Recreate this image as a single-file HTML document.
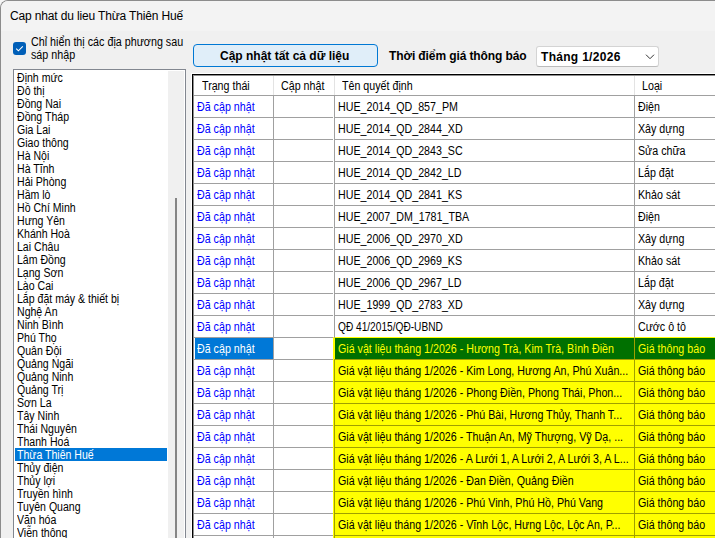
<!DOCTYPE html>
<html><head><meta charset="utf-8">
<style>
*{margin:0;padding:0;box-sizing:border-box}
html,body{width:715px;height:538px;overflow:hidden;background:#f0f0f0}
body{position:relative;font-family:"Liberation Sans",sans-serif;color:#000}
.a{position:absolute;white-space:nowrap}
.r{position:absolute}
.li{position:absolute;left:3px;font-size:12px;line-height:13px;white-space:nowrap;letter-spacing:0px;transform:scaleX(0.88);transform-origin:0 0}
.g{position:absolute;font-size:12px;line-height:13px;white-space:nowrap;letter-spacing:0px;transform:scaleX(0.89);transform-origin:0 0}
</style></head><body>
<div class="r" style="left:0;top:0;width:10px;height:10px;background:#f5f5f5"></div>
<div class="r" style="left:0;top:0;width:760px;height:600px;border-left:1px solid #8c8c8c;border-top:1px solid #8c8c8c;border-top-left-radius:8px;background:#f0f0f0;overflow:hidden"><div class="r" style="left:0;top:0;width:760px;height:30px;background:#f3f3f3"></div></div>
<div class="a" style="left:10px;top:9px;font-size:12px;line-height:14px;letter-spacing:-0.15px">Cap nhat du lieu Thừa Thiên Huế</div>
<div class="r" style="left:13px;top:42px;width:13px;height:13px;background:#005fb8;border-radius:3px"><svg width="13" height="13" viewBox="0 0 13 13" style="position:absolute;left:0;top:0"><path d="M3.2 6.6 L5.4 8.8 L9.8 4.3" fill="none" stroke="#fff" stroke-width="1.1"/></svg></div>
<div class="a" style="left:31px;top:36px;font-size:12px;line-height:12.5px;letter-spacing:0px;transform:scaleX(0.895);transform-origin:0 0">Chỉ hiển thị các địa phương sau<br>sáp nhập</div>
<div class="r" style="left:13px;top:69px;width:173px;height:480px;border:1px solid #828790;background:#fff;overflow:hidden"><div class="r" style="left:154px;top:1px;width:16px;height:480px;background:#f0f0f0"></div><div class="r" style="left:161px;top:128px;width:2px;height:400px;background:#858585"></div><div class="r" style="left:1px;top:378px;width:152px;height:13px;background:#0078d7"></div></div>
<div class="r" style="left:14px;top:71px;width:154px;height:467px;overflow:hidden">
<div class="li" style="top:1px;color:#000">Định mức</div>
<div class="li" style="top:14px;color:#000">Đô thị</div>
<div class="li" style="top:27px;color:#000">Đồng Nai</div>
<div class="li" style="top:40px;color:#000">Đồng Tháp</div>
<div class="li" style="top:53px;color:#000">Gia Lai</div>
<div class="li" style="top:66px;color:#000">Giao thông</div>
<div class="li" style="top:79px;color:#000">Hà Nội</div>
<div class="li" style="top:92px;color:#000">Hà Tĩnh</div>
<div class="li" style="top:105px;color:#000">Hải Phòng</div>
<div class="li" style="top:118px;color:#000">Hầm lò</div>
<div class="li" style="top:131px;color:#000">Hồ Chí Minh</div>
<div class="li" style="top:144px;color:#000">Hưng Yên</div>
<div class="li" style="top:157px;color:#000">Khánh Hoà</div>
<div class="li" style="top:170px;color:#000">Lai Châu</div>
<div class="li" style="top:183px;color:#000">Lâm Đồng</div>
<div class="li" style="top:196px;color:#000">Lạng Sơn</div>
<div class="li" style="top:209px;color:#000">Lào Cai</div>
<div class="li" style="top:222px;color:#000">Lắp đặt máy &amp; thiết bị</div>
<div class="li" style="top:235px;color:#000">Nghệ An</div>
<div class="li" style="top:248px;color:#000">Ninh Bình</div>
<div class="li" style="top:261px;color:#000">Phú Thọ</div>
<div class="li" style="top:274px;color:#000">Quân Đội</div>
<div class="li" style="top:287px;color:#000">Quảng Ngãi</div>
<div class="li" style="top:300px;color:#000">Quảng Ninh</div>
<div class="li" style="top:313px;color:#000">Quảng Trị</div>
<div class="li" style="top:326px;color:#000">Sơn La</div>
<div class="li" style="top:339px;color:#000">Tây Ninh</div>
<div class="li" style="top:352px;color:#000">Thái Nguyên</div>
<div class="li" style="top:365px;color:#000">Thanh Hoá</div>
<div class="li" style="top:378px;color:#fff">Thừa Thiên Huế</div>
<div class="li" style="top:391px;color:#000">Thủy điện</div>
<div class="li" style="top:404px;color:#000">Thủy lợi</div>
<div class="li" style="top:417px;color:#000">Truyền hình</div>
<div class="li" style="top:430px;color:#000">Tuyên Quang</div>
<div class="li" style="top:443px;color:#000">Văn hóa</div>
<div class="li" style="top:456px;color:#000">Viễn thông</div>
</div>
<div class="r" style="left:193px;top:44px;width:185px;height:23px;border:1px solid #0078d4;border-radius:4px;background:#e0eef9"></div>
<div class="a" style="left:220px;top:49px;font-size:12px;line-height:14px;font-weight:bold;letter-spacing:0px">Cập nhật tất cả dữ liệu</div>
<div class="a" style="left:389px;top:49px;font-size:12px;line-height:14px;font-weight:bold;letter-spacing:-0.1px">Thời điểm giá thông báo</div>
<div class="r" style="left:536px;top:46px;width:123px;height:21px;border:1px solid #d4d4d4;border-bottom-color:#bcbcbc;border-radius:3px;background:#fff"></div>
<div class="a" style="left:541px;top:50px;font-size:12px;line-height:14px;font-weight:bold;letter-spacing:0.3px">Tháng 1/2026</div>
<svg class="r" style="left:645px;top:53px" width="11" height="7" viewBox="0 0 11 7"><path d="M1 1.7 L5 5.7 L9 1.7" fill="none" stroke="#333" stroke-width="1"/></svg>
<div class="r" style="left:191px;top:73px;width:540px;height:480px;background:#fff;overflow:hidden">
<div class="r" style="left:3px;top:3px;width:540px;height:19px;background:#fff"></div>
<div class="r" style="left:3px;top:22px;width:540px;height:1px;background:#a0a0a0"></div>
<div class="r" style="left:82px;top:3px;width:1px;height:19px;background:#e3e3e3"></div>
<div class="r" style="left:143px;top:3px;width:1px;height:19px;background:#e3e3e3"></div>
<div class="r" style="left:443px;top:3px;width:1px;height:19px;background:#e3e3e3"></div>
<div class="g" style="left:11px;top:7px">Trạng thái</div>
<div class="g" style="left:90px;top:7px">Cập nhật</div>
<div class="g" style="left:151px;top:7px">Tên quyết định</div>
<div class="g" style="left:451px;top:7px">Loại</div>
<div class="r" style="left:142px;top:264px;width:500px;height:23px;background:#ff0"></div>
<div class="r" style="left:144px;top:265px;width:500px;height:21px;background:#007000"></div>
<div class="r" style="left:4px;top:265px;width:78px;height:21px;background:#0078d7"></div>
<div class="r" style="left:142px;top:286px;width:500px;height:23px;background:#ff0"></div>
<div class="r" style="left:142px;top:308px;width:500px;height:23px;background:#ff0"></div>
<div class="r" style="left:142px;top:330px;width:500px;height:23px;background:#ff0"></div>
<div class="r" style="left:142px;top:352px;width:500px;height:23px;background:#ff0"></div>
<div class="r" style="left:142px;top:374px;width:500px;height:23px;background:#ff0"></div>
<div class="r" style="left:142px;top:396px;width:500px;height:23px;background:#ff0"></div>
<div class="r" style="left:142px;top:418px;width:500px;height:23px;background:#ff0"></div>
<div class="r" style="left:142px;top:440px;width:500px;height:23px;background:#ff0"></div>
<div class="r" style="left:142px;top:462px;width:500px;height:23px;background:#ff0"></div>
<div class="r" style="left:3px;top:44px;width:139px;height:1px;background:#a0a0a0"></div>
<div class="r" style="left:143px;top:44px;width:500px;height:1px;background:#a0a0a0"></div>
<div class="r" style="left:3px;top:66px;width:139px;height:1px;background:#a0a0a0"></div>
<div class="r" style="left:143px;top:66px;width:500px;height:1px;background:#a0a0a0"></div>
<div class="r" style="left:3px;top:88px;width:139px;height:1px;background:#a0a0a0"></div>
<div class="r" style="left:143px;top:88px;width:500px;height:1px;background:#a0a0a0"></div>
<div class="r" style="left:3px;top:110px;width:139px;height:1px;background:#a0a0a0"></div>
<div class="r" style="left:143px;top:110px;width:500px;height:1px;background:#a0a0a0"></div>
<div class="r" style="left:3px;top:132px;width:139px;height:1px;background:#a0a0a0"></div>
<div class="r" style="left:143px;top:132px;width:500px;height:1px;background:#a0a0a0"></div>
<div class="r" style="left:3px;top:154px;width:139px;height:1px;background:#a0a0a0"></div>
<div class="r" style="left:143px;top:154px;width:500px;height:1px;background:#a0a0a0"></div>
<div class="r" style="left:3px;top:176px;width:139px;height:1px;background:#a0a0a0"></div>
<div class="r" style="left:143px;top:176px;width:500px;height:1px;background:#a0a0a0"></div>
<div class="r" style="left:3px;top:198px;width:139px;height:1px;background:#a0a0a0"></div>
<div class="r" style="left:143px;top:198px;width:500px;height:1px;background:#a0a0a0"></div>
<div class="r" style="left:3px;top:220px;width:139px;height:1px;background:#a0a0a0"></div>
<div class="r" style="left:143px;top:220px;width:500px;height:1px;background:#a0a0a0"></div>
<div class="r" style="left:3px;top:242px;width:139px;height:1px;background:#a0a0a0"></div>
<div class="r" style="left:143px;top:242px;width:500px;height:1px;background:#a0a0a0"></div>
<div class="r" style="left:3px;top:264px;width:139px;height:1px;background:#a0a0a0"></div>
<div class="r" style="left:142px;top:264px;width:500px;height:1px;background:#ff0"></div>
<div class="r" style="left:3px;top:286px;width:139px;height:1px;background:#a0a0a0"></div>
<div class="r" style="left:143px;top:286px;width:500px;height:1px;background:#a0a000"></div>
<div class="r" style="left:3px;top:308px;width:139px;height:1px;background:#a0a0a0"></div>
<div class="r" style="left:143px;top:308px;width:500px;height:1px;background:#a0a000"></div>
<div class="r" style="left:3px;top:330px;width:139px;height:1px;background:#a0a0a0"></div>
<div class="r" style="left:143px;top:330px;width:500px;height:1px;background:#a0a000"></div>
<div class="r" style="left:3px;top:352px;width:139px;height:1px;background:#a0a0a0"></div>
<div class="r" style="left:143px;top:352px;width:500px;height:1px;background:#a0a000"></div>
<div class="r" style="left:3px;top:374px;width:139px;height:1px;background:#a0a0a0"></div>
<div class="r" style="left:143px;top:374px;width:500px;height:1px;background:#a0a000"></div>
<div class="r" style="left:3px;top:396px;width:139px;height:1px;background:#a0a0a0"></div>
<div class="r" style="left:143px;top:396px;width:500px;height:1px;background:#a0a000"></div>
<div class="r" style="left:3px;top:418px;width:139px;height:1px;background:#a0a0a0"></div>
<div class="r" style="left:143px;top:418px;width:500px;height:1px;background:#a0a000"></div>
<div class="r" style="left:3px;top:440px;width:139px;height:1px;background:#a0a0a0"></div>
<div class="r" style="left:143px;top:440px;width:500px;height:1px;background:#a0a000"></div>
<div class="r" style="left:3px;top:462px;width:139px;height:1px;background:#a0a0a0"></div>
<div class="r" style="left:143px;top:462px;width:500px;height:1px;background:#a0a000"></div>
<div class="r" style="left:3px;top:484px;width:139px;height:1px;background:#a0a0a0"></div>
<div class="r" style="left:143px;top:484px;width:500px;height:1px;background:#a0a000"></div>
<div class="r" style="left:82px;top:23px;width:1px;height:242px;background:#a0a0a0"></div>
<div class="r" style="left:82px;top:265px;width:1px;height:300px;background:#a0a0a0"></div>
<div class="r" style="left:143px;top:23px;width:1px;height:242px;background:#a0a0a0"></div>
<div class="r" style="left:143px;top:265px;width:1px;height:21px;background:#ff0"></div>
<div class="r" style="left:143px;top:287px;width:1px;height:300px;background:#a0a000"></div>
<div class="r" style="left:443px;top:23px;width:1px;height:242px;background:#a0a0a0"></div>
<div class="r" style="left:443px;top:265px;width:1px;height:300px;background:#a0a000"></div>
<div class="g" style="left:6px;top:28px;color:#00f">Đã cập nhật</div>
<div class="g" style="left:147px;top:28px;color:#000">HUE_2014_QD_857_PM</div>
<div class="g" style="left:447px;top:28px;color:#000">Điện</div>
<div class="g" style="left:6px;top:50px;color:#00f">Đã cập nhật</div>
<div class="g" style="left:147px;top:50px;color:#000">HUE_2014_QD_2844_XD</div>
<div class="g" style="left:447px;top:50px;color:#000">Xây dựng</div>
<div class="g" style="left:6px;top:72px;color:#00f">Đã cập nhật</div>
<div class="g" style="left:147px;top:72px;color:#000">HUE_2014_QD_2843_SC</div>
<div class="g" style="left:447px;top:72px;color:#000">Sửa chữa</div>
<div class="g" style="left:6px;top:94px;color:#00f">Đã cập nhật</div>
<div class="g" style="left:147px;top:94px;color:#000">HUE_2014_QD_2842_LD</div>
<div class="g" style="left:447px;top:94px;color:#000">Lắp đặt</div>
<div class="g" style="left:6px;top:116px;color:#00f">Đã cập nhật</div>
<div class="g" style="left:147px;top:116px;color:#000">HUE_2014_QD_2841_KS</div>
<div class="g" style="left:447px;top:116px;color:#000">Khảo sát</div>
<div class="g" style="left:6px;top:138px;color:#00f">Đã cập nhật</div>
<div class="g" style="left:147px;top:138px;color:#000">HUE_2007_DM_1781_TBA</div>
<div class="g" style="left:447px;top:138px;color:#000">Điện</div>
<div class="g" style="left:6px;top:160px;color:#00f">Đã cập nhật</div>
<div class="g" style="left:147px;top:160px;color:#000">HUE_2006_QD_2970_XD</div>
<div class="g" style="left:447px;top:160px;color:#000">Xây dựng</div>
<div class="g" style="left:6px;top:182px;color:#00f">Đã cập nhật</div>
<div class="g" style="left:147px;top:182px;color:#000">HUE_2006_QD_2969_KS</div>
<div class="g" style="left:447px;top:182px;color:#000">Khảo sát</div>
<div class="g" style="left:6px;top:204px;color:#00f">Đã cập nhật</div>
<div class="g" style="left:147px;top:204px;color:#000">HUE_2006_QD_2967_LD</div>
<div class="g" style="left:447px;top:204px;color:#000">Lắp đặt</div>
<div class="g" style="left:6px;top:226px;color:#00f">Đã cập nhật</div>
<div class="g" style="left:147px;top:226px;color:#000">HUE_1999_QD_2783_XD</div>
<div class="g" style="left:447px;top:226px;color:#000">Xây dựng</div>
<div class="g" style="left:6px;top:248px;color:#00f">Đã cập nhật</div>
<div class="g" style="left:147px;top:248px;color:#000;transform:scaleX(0.845)">QĐ 41/2015/QĐ-UBND</div>
<div class="g" style="left:447px;top:248px;color:#000">Cước ô tô</div>
<div class="g" style="left:6px;top:270px;color:#fff">Đã cập nhật</div>
<div class="g" style="left:147px;top:270px;color:#ff0">Giá vật liệu tháng 1/2026 - Hương Trà, Kim Trà, Bình Điền</div>
<div class="g" style="left:447px;top:270px;color:#ff0">Giá thông báo</div>
<div class="g" style="left:6px;top:292px;color:#00f">Đã cập nhật</div>
<div class="g" style="left:147px;top:292px;color:#000">Giá vật liệu tháng 1/2026 - Kim Long, Hương An, Phú Xuân...</div>
<div class="g" style="left:447px;top:292px;color:#000">Giá thông báo</div>
<div class="g" style="left:6px;top:314px;color:#00f">Đã cập nhật</div>
<div class="g" style="left:147px;top:314px;color:#000">Giá vật liệu tháng 1/2026 - Phong Điền, Phong Thái, Phon...</div>
<div class="g" style="left:447px;top:314px;color:#000">Giá thông báo</div>
<div class="g" style="left:6px;top:336px;color:#00f">Đã cập nhật</div>
<div class="g" style="left:147px;top:336px;color:#000">Giá vật liệu tháng 1/2026 - Phú Bài, Hương Thủy, Thanh T...</div>
<div class="g" style="left:447px;top:336px;color:#000">Giá thông báo</div>
<div class="g" style="left:6px;top:358px;color:#00f">Đã cập nhật</div>
<div class="g" style="left:147px;top:358px;color:#000">Giá vật liệu tháng 1/2026 - Thuận An, Mỹ Thượng, Vỹ Dạ, ...</div>
<div class="g" style="left:447px;top:358px;color:#000">Giá thông báo</div>
<div class="g" style="left:6px;top:380px;color:#00f">Đã cập nhật</div>
<div class="g" style="left:147px;top:380px;color:#000">Giá vật liệu tháng 1/2026 - A Lưới 1, A Lưới 2, A Lưới 3, A L...</div>
<div class="g" style="left:447px;top:380px;color:#000">Giá thông báo</div>
<div class="g" style="left:6px;top:402px;color:#00f">Đã cập nhật</div>
<div class="g" style="left:147px;top:402px;color:#000">Giá vật liệu tháng 1/2026 - Đan Điền, Quảng Điền</div>
<div class="g" style="left:447px;top:402px;color:#000">Giá thông báo</div>
<div class="g" style="left:6px;top:424px;color:#00f">Đã cập nhật</div>
<div class="g" style="left:147px;top:424px;color:#000">Giá vật liệu tháng 1/2026 - Phú Vinh, Phú Hồ, Phú Vang</div>
<div class="g" style="left:447px;top:424px;color:#000">Giá thông báo</div>
<div class="g" style="left:6px;top:446px;color:#00f">Đã cập nhật</div>
<div class="g" style="left:147px;top:446px;color:#000">Giá vật liệu tháng 1/2026 - Vĩnh Lộc, Hưng Lộc, Lộc An, P...</div>
<div class="g" style="left:447px;top:446px;color:#000">Giá thông báo</div>
<div class="g" style="left:6px;top:468px;color:#00f">Đã cập nhật</div>
<div class="g" style="left:147px;top:468px;color:#000">Giá vật liệu tháng 1/2026</div>
<div class="g" style="left:447px;top:468px;color:#000">Giá thông báo</div>
<div class="r" style="left:1px;top:1px;width:2px;height:480px;background:#909090"></div>
<div class="r" style="left:1px;top:1px;width:540px;height:2px;background:#909090"></div>
<div class="r" style="left:1px;top:1px;width:1px;height:480px;background:#000"></div>
<div class="r" style="left:1px;top:1px;width:540px;height:1px;background:#000"></div>
</div>
</body></html>
